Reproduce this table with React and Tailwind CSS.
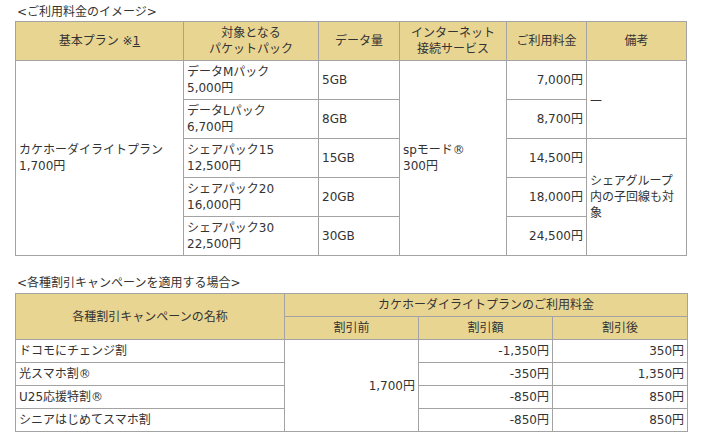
import React from 'react';

const font = { fontFamily: '"DejaVu Sans", "Noto Sans CJK JP", sans-serif' };

const td = 'border border-[#a3a3a3] px-[3px] py-0 leading-[16px] align-middle';
const th = 'border border-[#a3a3a3] bg-[#e9d592] font-normal text-center px-[3px] py-0 leading-[16px]';

const packs = [
  { name: 'データMパック', price: '5,000円', gb: '5GB', fee: '7,000円' },
  { name: 'データLパック', price: '6,700円', gb: '8GB', fee: '8,700円' },
  { name: 'シェアパック15', price: '12,500円', gb: '15GB', fee: '14,500円' },
  { name: 'シェアパック20', price: '16,000円', gb: '20GB', fee: '18,000円' },
  { name: 'シェアパック30', price: '22,500円', gb: '30GB', fee: '24,500円' },
];

const campaigns = [
  { name: 'ドコモにチェンジ割', off: '-1,350円', after: '350円' },
  { name: '光スマホ割®', off: '-350円', after: '1,350円' },
  { name: 'U25応援特割®', off: '-850円', after: '850円' },
  { name: 'シニアはじめてスマホ割', off: '-850円', after: '850円' },
];

export default function App() {
  return (
    <div className="w-[703px] h-[446px] bg-white text-[#333] text-[12px] pl-[15px] pt-[4px]" style={font}>
      <p className="leading-[16px] pl-[2px] mb-[1px]">&lt;ご利用料金のイメージ&gt;</p>
      <table className="table-fixed border-collapse w-[672px]">
        <colgroup>
          <col className="w-[168px]" />
          <col className="w-[135px]" />
          <col className="w-[81px]" />
          <col className="w-[107px]" />
          <col className="w-[80px]" />
          <col className="w-[100px]" />
        </colgroup>
        <thead>
          <tr className="h-[39px]">
            <th className={th}>
              基本プラン ※<span className="underline">1</span>
            </th>
            <th className={th}>対象となる<br />パケットパック</th>
            <th className={th}>データ量</th>
            <th className={th}>インターネット<br />接続サービス</th>
            <th className={th}>ご利用料金</th>
            <th className={th}>備考</th>
          </tr>
        </thead>
        <tbody>
          {packs.map((p, i) => (
            <tr key={p.name} className="h-[39px]">
              {i === 0 && (
                <td rowSpan={5} className={td}>カケホーダイライトプラン<br />1,700円</td>
              )}
              <td className={td}>{p.name}<br />{p.price}</td>
              <td className={td}>{p.gb}</td>
              {i === 0 && (
                <td rowSpan={5} className={td}>spモード®<br />300円</td>
              )}
              <td className={`${td} text-right`}>{p.fee}</td>
              {i === 0 && <td rowSpan={2} className={td}>—</td>}
              {i === 2 && (
                <td rowSpan={3} className={td}>シェアグループ<br />内の子回線も対<br />象</td>
              )}
            </tr>
          ))}
        </tbody>
      </table>

      <p className="leading-[16px] pl-[2px] mt-[19px] mb-[2px]">&lt;各種割引キャンペーンを適用する場合&gt;</p>
      <table className="table-fixed border-collapse w-[672px]">
        <colgroup>
          <col className="w-[269px]" />
          <col className="w-[134px]" />
          <col className="w-[134px]" />
          <col className="w-[135px]" />
        </colgroup>
        <thead>
          <tr className="h-[23px]">
            <th rowSpan={2} className={th}>各種割引キャンペーンの名称</th>
            <th colSpan={3} className={th}>カケホーダイライトプランのご利用料金</th>
          </tr>
          <tr className="h-[23px]">
            <th className={th}>割引前</th>
            <th className={th}>割引額</th>
            <th className={th}>割引後</th>
          </tr>
        </thead>
        <tbody>
          {campaigns.map((c, i) => (
            <tr key={c.name} className="h-[23px]">
              <td className={td}>{c.name}</td>
              {i === 0 && (
                <td rowSpan={4} className={`${td} text-right`}>1,700円</td>
              )}
              <td className={`${td} text-right`}>{c.off}</td>
              <td className={`${td} text-right`}>{c.after}</td>
            </tr>
          ))}
        </tbody>
      </table>
    </div>
  );
}
